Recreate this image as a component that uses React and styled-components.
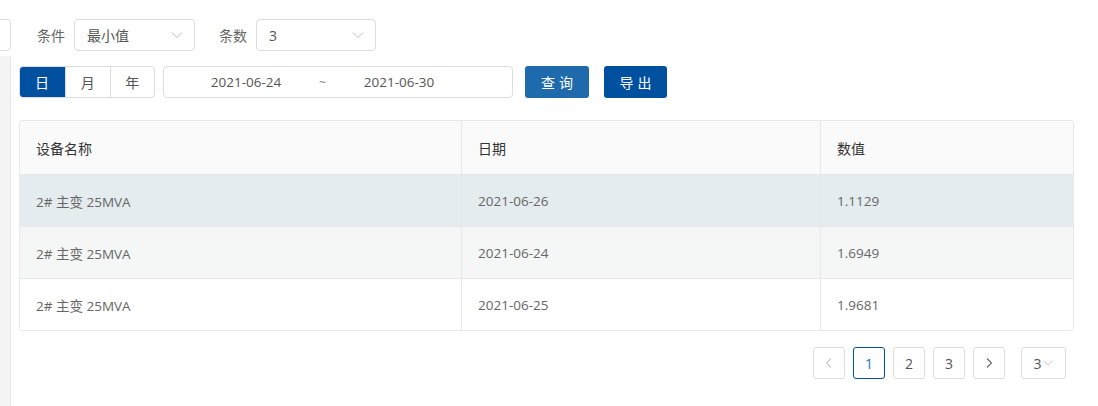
import React from "react";
import styled, { createGlobalStyle, css } from "styled-components";

const GlobalStyle = createGlobalStyle`
  html, body {
    margin: 0;
    padding: 0;
    background: #fff;
    font-family: "Open Sans", "Noto Sans CJK SC", sans-serif;
    color: #333;
    overflow: hidden;
  }
`;

const Page = styled.div`
  width: 1098px;
  height: 406px;
  display: flex;
  flex-direction: column;
  overflow: hidden;
`;

const FilterBar = styled.div`
  display: flex;
  align-items: center;
  height: 32px;
  margin-top: 19px;
  margin-left: -110px;
`;

const Label = styled.span`
  font-size: 14px;
  color: #666;
  margin: 0 9px 0 ${(p) => p.$gap || 0}px;
`;

const SelectBox = styled.div`
  box-sizing: border-box;
  width: ${(p) => p.$width}px;
  height: 32px;
  border: 1px solid #dcdcdc;
  border-radius: 4px;
  display: flex;
  align-items: center;
  justify-content: space-between;
  padding: 0 10px 0 12px;
  font-size: 14px;
  color: #555;
`;

const Chevron = ({ color = "#bbb", size = 14 }) => (
  <svg width={size} height={size} viewBox="0 0 14 14" fill="none">
    <path d="M2 4.5 L7 9.5 L12 4.5" stroke={color} strokeWidth="1" />
  </svg>
);

const Body = styled.div`
  flex: 1;
  display: flex;
  margin-top: 5px;
`;

const Sidebar = styled.div`
  width: 10px;
  background: #f4f4f4;
  border-right: 1px solid #e6e6e6;
`;

const Main = styled.div`
  flex: 1;
  padding: 10px 24px 0 8px;
  display: flex;
  flex-direction: column;
`;

const Toolbar = styled.div`
  display: flex;
  align-items: center;
  height: 32px;
`;

const Segment = styled.div`
  display: flex;
  width: 136px;
  height: 32px;
  box-sizing: border-box;
  border: 1px solid #dcdcdc;
  border-radius: 4px;
  overflow: hidden;
`;

const SegButton = styled.div`
  flex: 1;
  display: flex;
  align-items: center;
  justify-content: center;
  font-size: 14px;
  color: #555;
  & + & {
    border-left: 1px solid #dcdcdc;
  }
  ${(p) =>
    p.$active &&
    css`
      flex: 0 0 46px;
      background: #0050a0;
      color: #fff;
      margin: -1px 0 -1px -1px;
    `}
`;

const DateRange = styled.div`
  box-sizing: border-box;
  width: 350px;
  height: 32px;
  margin-left: 8px;
  border: 1px solid #dcdcdc;
  border-radius: 4px;
  display: grid;
  grid-template-columns: 130px 23px 130px;
  align-items: center;
  justify-items: center;
  font-size: 13.5px;
  color: #555;
  padding-left: 17px;
`;

const Tilde = styled.span`
  color: #888;
  font-size: 12px;
`;

const Button = styled.button`
  height: 32px;
  width: ${(p) => p.$width}px;
  margin-left: ${(p) => p.$gap}px;
  border: none;
  border-radius: 3px;
  background: ${(p) => p.$bg};
  color: #fff;
  font-family: inherit;
  font-size: 14px;
  letter-spacing: 4px;
  text-indent: 4px;
  cursor: pointer;
`;

const Table = styled.table`
  margin-top: 22px;
  width: 1055px;
  border-collapse: separate;
  border-spacing: 0;
  border: 1px solid #e8e8e8;
  border-radius: 3px;
  font-size: 13.5px;
  overflow: hidden;
`;

const Th = styled.th`
  height: 53px;
  background: #fafafa;
  text-align: left;
  font-weight: normal;
  font-size: 14px;
  color: #333;
  padding: 0 16px;
  border-bottom: 1px solid #e8e8e8;
  & + & {
    border-left: 1px solid #e8e8e8;
  }
`;

const Tr = styled.tr`
  background: ${(p) => p.$bg};
`;

const Td = styled.td`
  height: 51px;
  padding: 0 16px;
  color: #666;
  border-bottom: ${(p) => (p.$last ? "none" : "1px solid #e8e8e8")};
  & + & {
    border-left: 1px solid #e8e8e8;
  }
`;

const Pager = styled.div`
  display: flex;
  justify-content: flex-end;
  align-items: center;
  gap: 8px;
  margin-top: 16px;
  margin-right: 8px;
`;

const PageItem = styled.div`
  box-sizing: border-box;
  width: ${(p) => p.$width || 32}px;
  height: 32px;
  border: 1px solid ${(p) => (p.$active ? "#0050a0" : "#dcdcdc")};
  border-radius: 3px;
  display: flex;
  align-items: center;
  justify-content: center;
  font-size: 14px;
  color: ${(p) => (p.$active ? "#1a73c8" : "#555")};
  margin-left: ${(p) => p.$gap || 0}px;
`;

const rows = [
  { name: "2# 主变 25MVA", date: "2021-06-26", value: "1.1129", bg: "#e5ecef" },
  { name: "2# 主变 25MVA", date: "2021-06-24", value: "1.6949", bg: "#f5f7f7" },
  { name: "2# 主变 25MVA", date: "2021-06-25", value: "1.9681", bg: "#fff" },
];

const Arrow = ({ dir, color }) => (
  <svg width="12" height="12" viewBox="0 0 12 12" fill="none">
    <path
      d={dir === "left" ? "M8 1.5 L3.5 6 L8 10.5" : "M4 1.5 L8.5 6 L4 10.5"}
      stroke={color}
      strokeWidth="1.1"
    />
  </svg>
);

export default function App() {
  return (
    <Page>
      <GlobalStyle />
      <FilterBar>
        <SelectBox $width={121} />
        <Label $gap={26}>条件</Label>
        <SelectBox $width={121}>
          最小值
          <Chevron />
        </SelectBox>
        <Label $gap={24}>条数</Label>
        <SelectBox $width={120}>
          3
          <Chevron />
        </SelectBox>
      </FilterBar>
      <Body>
        <Sidebar />
        <Main>
          <Toolbar>
            <Segment>
              <SegButton $active>日</SegButton>
              <SegButton>月</SegButton>
              <SegButton>年</SegButton>
            </Segment>
            <DateRange>
              <span>2021-06-24</span>
              <Tilde>~</Tilde>
              <span>2021-06-30</span>
            </DateRange>
            <Button $width={64} $gap={12} $bg="#1f69ad">
              查询
            </Button>
            <Button $width={63} $gap={15} $bg="#0050a0">
              导出
            </Button>
          </Toolbar>
          <Table>
            <colgroup>
              <col style={{ width: 441 }} />
              <col style={{ width: 359 }} />
              <col />
            </colgroup>
            <thead>
              <tr>
                <Th>设备名称</Th>
                <Th>日期</Th>
                <Th>数值</Th>
              </tr>
            </thead>
            <tbody>
              {rows.map((r, i) => (
                <Tr key={i} $bg={r.bg}>
                  <Td $last={i === rows.length - 1}>{r.name}</Td>
                  <Td $last={i === rows.length - 1}>{r.date}</Td>
                  <Td $last={i === rows.length - 1}>{r.value}</Td>
                </Tr>
              ))}
            </tbody>
          </Table>
          <Pager>
            <PageItem>
              <Arrow dir="left" color="#c8c8c8" />
            </PageItem>
            <PageItem $active>1</PageItem>
            <PageItem>2</PageItem>
            <PageItem>3</PageItem>
            <PageItem>
              <Arrow dir="right" color="#666" />
            </PageItem>
            <PageItem $width={45} $gap={8}>
              3
              <Chevron size={12} />
            </PageItem>
          </Pager>
        </Main>
      </Body>
    </Page>
  );
}
